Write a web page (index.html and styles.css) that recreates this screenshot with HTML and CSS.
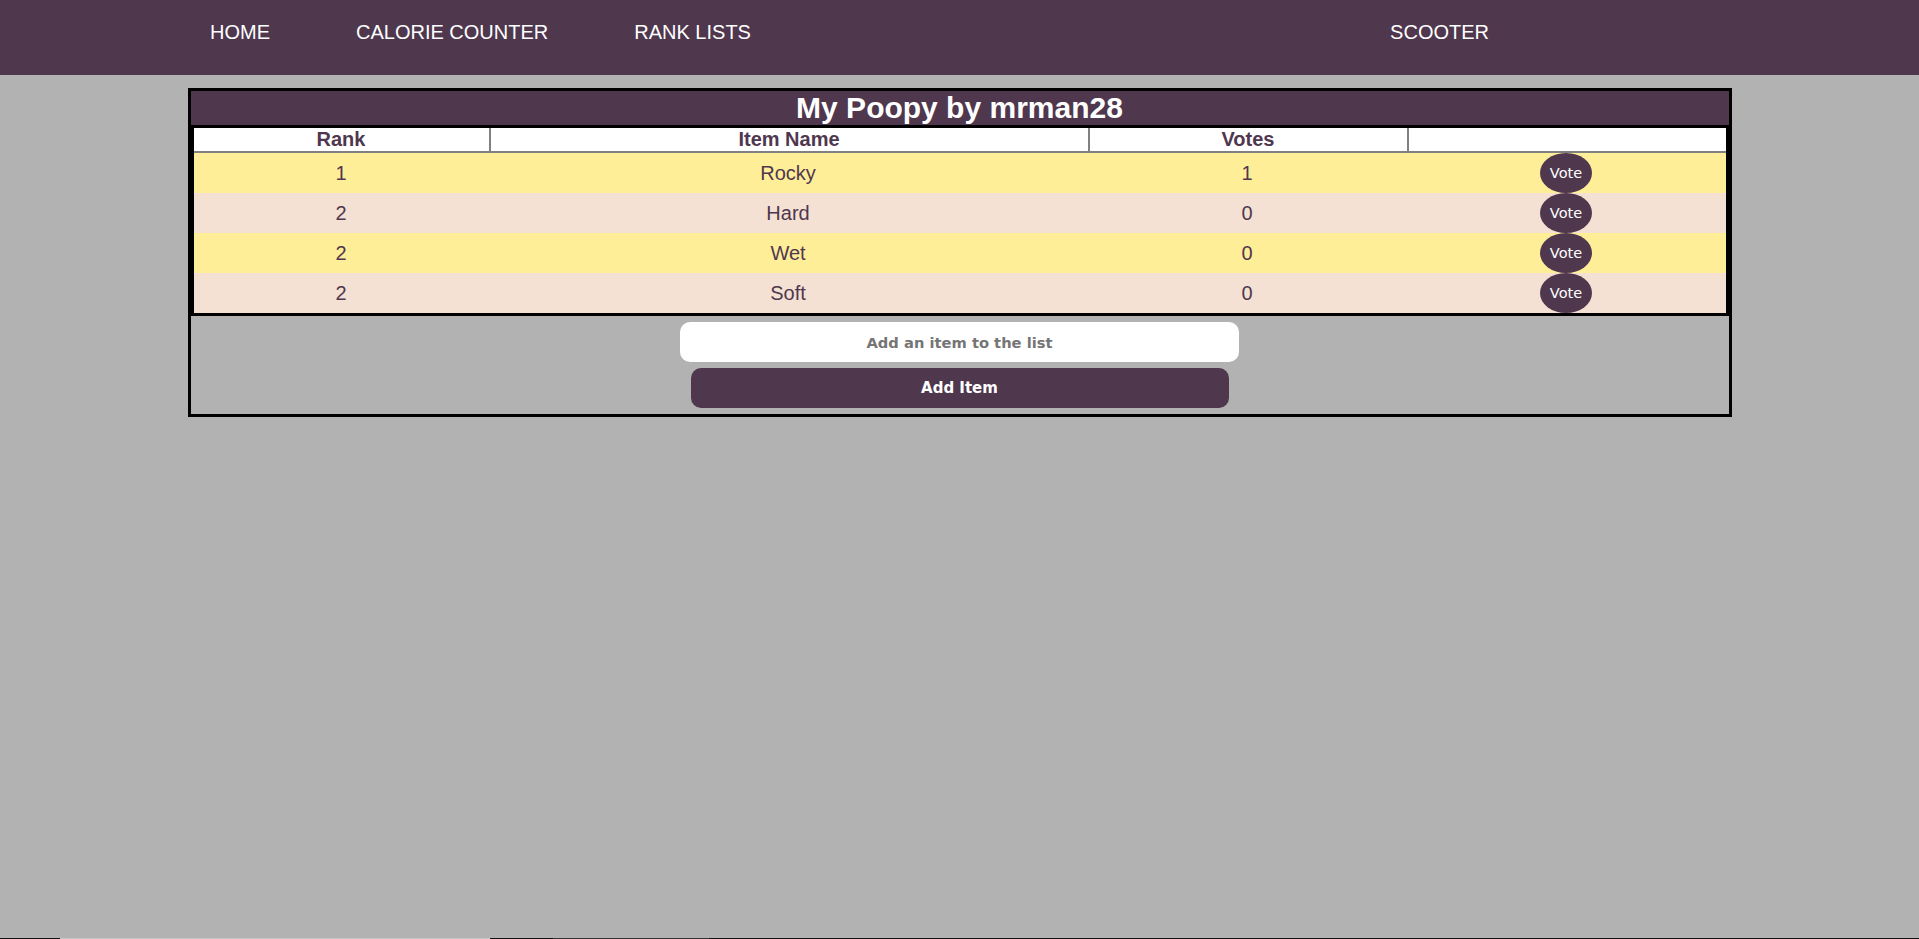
FILE: index.html
```html
<!DOCTYPE html>
<html lang="en">
<head>
<meta charset="utf-8">
<title>My Poopy by mrman28</title>
<link rel="stylesheet" href="styles.css">
</head>
<body>
<nav class="topnav">
  <ul class="nav-list">
    <li class="nav-item">HOME</li>
    <li class="nav-item">CALORIE COUNTER</li>
    <li class="nav-item">RANK LISTS</li>
    <li class="nav-item nav-right">SCOOTER</li>
  </ul>
</nav>
<main class="list-box">
  <h2 class="list-title">My Poopy by mrman28</h2>
  <table class="rank-table">
    <thead>
      <tr>
        <th class="col-rank">Rank</th>
        <th class="col-name">Item Name</th>
        <th class="col-votes">Votes</th>
        <th class="col-action"></th>
      </tr>
    </thead>
    <tbody>
      <tr class="row-odd"><td>1</td><td>Rocky</td><td>1</td><td><button class="vote-btn">Vote</button></td></tr>
      <tr class="row-even"><td>2</td><td>Hard</td><td>0</td><td><button class="vote-btn">Vote</button></td></tr>
      <tr class="row-odd"><td>2</td><td>Wet</td><td>0</td><td><button class="vote-btn">Vote</button></td></tr>
      <tr class="row-even"><td>2</td><td>Soft</td><td>0</td><td><button class="vote-btn">Vote</button></td></tr>
    </tbody>
  </table>
  <form class="add-form">
    <input class="add-input" type="text" placeholder="Add an item to the list">
    <button class="add-btn" type="button">Add Item</button>
  </form>
</main>
<div class="screen-edge"></div>
</body>
</html>
```
FILE: styles.css
```css
html, body {
  margin: 0;
  padding: 0;
}
body {
  background: #b2b2b2;
  font-family: "Liberation Sans", Arial, sans-serif;
  font-size: 20px;
  color: #4f374f;
  min-height: 939px;
}
.topnav {
  background: #4f374e;
  height: 75px;
  box-sizing: border-box;
  padding: 21px 430px 0 210px;
}
.nav-list {
  list-style: none;
  margin: 0;
  padding: 0;
  display: flex;
  gap: 86px;
}
.nav-item {
  color: #ffffff;
  font-size: 20px;
  line-height: 23px;
  white-space: nowrap;
}
.nav-right {
  margin-left: auto;
}
.list-box {
  width: 1538px;
  margin: 13px auto 0;
  border: 3px solid #000;
}
.list-title {
  margin: 0;
  background: #4f374e;
  color: #ffffff;
  font-size: 30px;
  font-weight: bold;
  line-height: 34px;
  height: 34px;
  text-align: center;
}
.rank-table {
  border: 3px solid #000;
  border-collapse: separate;
  border-spacing: 0;
  table-layout: fixed;
  width: 1538px;
}
.rank-table th {
  background: #ffffff;
  color: #4f374f;
  font-weight: bold;
  font-size: 20px;
  line-height: 23px;
  height: 23px;
  padding: 0;
  border-bottom: 2px solid #808080;
  text-align: center;
}
.rank-table th + th {
  border-left: 2px solid #808080;
}
.col-rank { width: 295px; }
.col-name { width: 597px; }
.col-votes { width: 317px; }
.col-action { width: 317px; }
.rank-table td {
  padding: 0;
  height: 40px;
  text-align: center;
  vertical-align: middle;
  font-size: 20px;
  color: #4f374f;
}
.row-odd { background: #ffee98; }
.row-even { background: #f4e1d3; }
.vote-btn {
  display: block;
  margin: 0 auto;
  width: 52px;
  height: 40px;
  border: none;
  border-radius: 50%;
  padding: 0;
  background: #4f374e;
  color: #ffffff;
  font-family: "DejaVu Sans", Verdana, sans-serif;
  font-size: 14.5px;
}
.add-form {
  display: flex;
  flex-direction: column;
  align-items: center;
  gap: 6px;
  padding: 6px 0;
  margin: 0;
}
.add-input {
  width: 559px;
  height: 40px;
  box-sizing: border-box;
  border: none;
  border-radius: 10px;
  background: #ffffff;
  padding: 0;
  text-align: center;
  font-family: "DejaVu Sans", Verdana, sans-serif;
  font-weight: bold;
  font-size: 14.7px;
  color: #333;
}
.add-input::placeholder {
  color: #757575;
  opacity: 1;
}
.add-btn {
  width: 538px;
  height: 40px;
  border: none;
  border-radius: 10px;
  background: #4f374e;
  color: #ffffff;
  font-family: "DejaVu Sans", Verdana, sans-serif;
  font-weight: bold;
  font-size: 15px;
  padding: 0;
}
.screen-edge {
  position: fixed;
  left: 0;
  bottom: 0;
  width: 100%;
  height: 1px;
  background: linear-gradient(to right,
    #111 0, #111 60px,
    #c6c6c6 60px, #c6c6c6 490px,
    #111 490px, #111 553px,
    #333 553px, #333 709px,
    #111 709px, #111 100%);
}
```
